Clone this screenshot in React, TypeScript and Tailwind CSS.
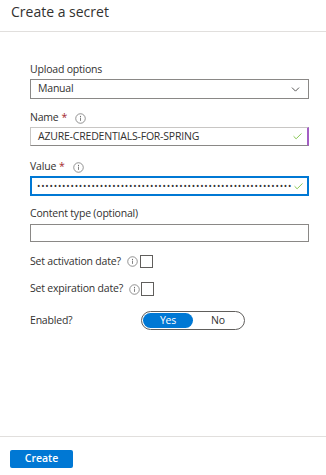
import { ChevronDown, Check } from 'lucide-react';

const font = { fontFamily: '"Open Sans", "Noto Sans", sans-serif' };

function Info({ className = '' }: { className?: string }) {
  return (
    <svg viewBox="0 0 12 12" className={`w-[11px] h-[11px] shrink-0 ${className}`}>
      <circle cx="6" cy="6" r="5.2" fill="none" stroke="#6b6b6b" strokeWidth="0.8" />
      <circle cx="6" cy="3.7" r="0.6" fill="#6b6b6b" />
      <rect x="5.55" y="5" width="0.9" height="3.6" fill="#6b6b6b" />
    </svg>
  );
}

function Label({ text, required, info }: { text: string; required?: boolean; info?: boolean }) {
  return (
    <div className="flex items-center h-[14px] text-[10.5px] tracking-[-0.2px] text-[#323130]">
      <span>{text}</span>
      {required && <span className="text-[#a4262c] ml-[3px]">*</span>}
      {info && <Info className="ml-[8px]" />}
    </div>
  );
}

export default function App() {
  return (
    <div className="w-[326px] h-[475px] bg-white flex flex-col" style={font}>
      <div className="h-[32px] border-b border-[#e1dfdd] px-[11px] pt-[2px] shrink-0">
        <h1 className="text-[14px] text-[#323130] leading-[20px]">Create a secret</h1>
      </div>

      <div className="flex-1 flex flex-col pl-[30px] pr-[17px] pt-[31px]">
        <Label text="Upload options" />
        <div className="mt-[2px] h-[20px] border border-[#8a8886] flex items-center justify-between pl-[7px] pr-[6px] text-[10.5px] tracking-[-0.2px] text-[#323130]">
          <span>Manual</span>
          <ChevronDown className="w-[13px] h-[13px] text-[#323130]" strokeWidth={1.5} />
        </div>

        <div className="mt-[12px]">
          <Label text="Name" required info />
        </div>
        <div className="mt-[2px] h-[19px] border border-[#c8c6c4] border-b-[#8a8886] border-r-[#a35ec4] border-r-2 flex items-center justify-between pl-[7px] pr-[4px] text-[10.5px] tracking-[-0.2px] text-[#323130]">
          <span>AZURE-CREDENTIALS-FOR-SPRING</span>
          <Check className="w-[11px] h-[11px] text-[#7cc242]" strokeWidth={2} />
        </div>

        <div className="mt-[14px]">
          <Label text="Value" required info />
        </div>
        <div className="mt-[2px] h-[20px] border-2 border-[#0078d4] flex items-center justify-between pl-[5px] pr-[4px] text-[#323130]">
          <span className="whitespace-nowrap text-[9px] tracking-[0.8px] leading-[16px]">
            {'•'.repeat(61)}
          </span>
          <Check className="w-[11px] h-[11px] text-[#7cc242] shrink-0 ml-[1px]" strokeWidth={2} />
        </div>

        <div className="mt-[11px]">
          <Label text="Content type (optional)" />
        </div>
        <div className="mt-[3px] h-[18px] border border-[#8a8886]" />

        <div className="mt-[13px] flex items-center h-[13px] text-[10.5px] tracking-[-0.2px] text-[#323130]">
          <span>Set activation date?</span>
          <Info className="ml-[6px]" />
          <div className="ml-[2px] w-[13px] h-[13px] border border-[#605e5c]" />
        </div>

        <div className="mt-[14px] flex items-center h-[14px] text-[10.5px] tracking-[-0.2px] text-[#323130]">
          <span>Set expiration date?</span>
          <Info className="ml-[6px]" />
          <div className="ml-[1px] w-[13px] h-[14px] border border-[#605e5c]" />
        </div>

        <div className="mt-[15px] flex items-center text-[10.5px] tracking-[-0.2px] text-[#323130]">
          <span className="w-[111px]">Enabled?</span>
          <div className="w-[104px] h-[19px] border border-[#605e5c] rounded-full p-[1px] flex">
            <div className="w-[50px] rounded-full bg-[#0078d4] text-white flex items-center justify-center">Yes</div>
            <div className="flex-1 flex items-center justify-center">No</div>
          </div>
        </div>
      </div>

      <div className="h-[39px] border-t border-[#e1dfdd] px-[10px] pt-[13px] shrink-0">
        <button className="w-[63px] h-[18px] bg-[#0078d4] rounded-[2px] text-white text-[10.5px] font-semibold flex items-center justify-center">
          Create
        </button>
      </div>
    </div>
  );
}
